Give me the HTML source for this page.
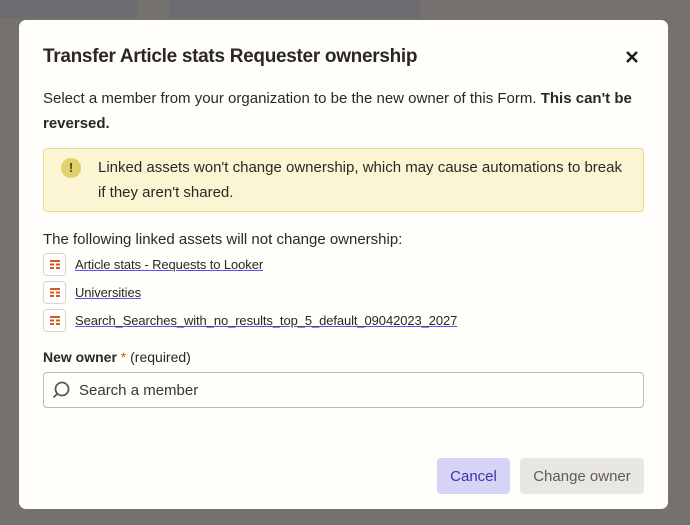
<!DOCTYPE html>
<html><head><style>
*{box-sizing:border-box;margin:0;padding:0}
body{width:690px;height:525px;background:#74716e;font-family:"Liberation Sans",sans-serif;position:relative;overflow:hidden;color:#2b2824}
.bg1{position:absolute;left:0;top:0;width:420px;height:18px;background:#6c6b70}
.bg2{position:absolute;left:137px;top:0;width:32px;height:20px;background:#74716e}
.m{position:absolute;left:19px;top:20px;width:649px;height:489px;background:#fffefb;border-radius:7px}
.a{position:absolute}
h1{position:absolute;left:43px;top:46px;font-size:19px;font-weight:bold;color:#2b2824;letter-spacing:-0.3px}
.p{left:43px;top:86px;width:600px;font-size:15px;line-height:25px}
.w{left:43px;top:148px;width:601px;height:64px;background:#fbf5d3;border:1px solid #e6db92;border-radius:4px}
.ic{left:61px;top:158px;width:20px;height:20px;border-radius:50%;background:#e0d26a;color:#4a4420;font-size:13px;font-weight:bold;text-align:center;line-height:20px}
.wt{left:98px;top:155px;width:525px;font-size:15px;line-height:25px}
.f{left:43px;top:231px;font-size:15px}
.li{position:absolute;left:43px;width:23px;height:23px;border:1px solid #d8d5cf;border-radius:4px;background:#fff}
.li svg{position:absolute;left:6px;top:6px}
.ln{position:absolute;left:75px;font-size:13px;color:#2b2824;text-decoration:underline;text-decoration-color:#5a4ff0;letter-spacing:-0.1px}
.lb{left:43px;top:349px;font-size:14px}
.in{left:43px;top:372px;width:601px;height:36px;border:1px solid #bdb9b3;border-radius:4px}
.btn{position:absolute;top:458px;height:36px;border-radius:4px;font-size:15px;line-height:36px;padding-top:1px;text-align:center}
</style></head><body>
<div class="bg1"></div><div class="bg2"></div>
<div class="m"></div>
<h1>Transfer Article stats Requester ownership</h1>
<svg class="a" style="left:625px;top:50px" width="14" height="14" viewBox="0 0 14 14"><path d="M2 2L12 12M12 2L2 12" stroke="#1f1c19" stroke-width="2.4"/></svg>
<div class="a p">Select a member from your organization to be the new owner of this Form. <b>This can't be reversed.</b></div>
<div class="a w"></div>
<div class="a ic">!</div>
<div class="a wt">Linked assets won't change ownership, which may cause automations to break if they aren't shared.</div>
<div class="a f">The following linked assets will not change ownership:</div>
<div class="li" style="top:253px"><svg width="10" height="10"><path d="M0 1h10M0 4.5h4M6 4.5h4M0 8h4M6 8h4" stroke="#d9571c" stroke-width="2"/></svg></div>
<div class="ln" style="top:257px">Article stats - Requests to Looker</div>
<div class="li" style="top:281px"><svg width="10" height="10"><path d="M0 1h10M0 4.5h4M6 4.5h4M0 8h4M6 8h4" stroke="#d9571c" stroke-width="2"/></svg></div>
<div class="ln" style="top:285px">Universities</div>
<div class="li" style="top:309px"><svg width="10" height="10"><path d="M0 1h10M0 4.5h4M6 4.5h4M0 8h4M6 8h4" stroke="#d9571c" stroke-width="2"/></svg></div>
<div class="ln" style="top:313px">Search_Searches_with_no_results_top_5_default_09042023_2027</div>
<div class="a lb"><b>New owner</b><span style="color:#d9571c"> *</span> (required)</div>
<div class="a in"></div>
<svg class="a" style="left:51px;top:380px" width="20" height="20" viewBox="0 0 20 20"><circle cx="11" cy="9" r="6.5" fill="none" stroke="#5b5752" stroke-width="1.8"/><path d="M6.5 13.5L2.5 17.5" stroke="#5b5752" stroke-width="1.8"/></svg>
<div class="a" style="left:79px;top:382px;font-size:15px;color:#3a3632">Search a member</div>
<div class="btn" style="left:437px;width:73px;background:#d5d3f6;color:#3d35a8">Cancel</div>
<div class="btn" style="left:520px;width:124px;background:#e9e7e1;color:#5f5b55">Change owner</div>
</body></html>
